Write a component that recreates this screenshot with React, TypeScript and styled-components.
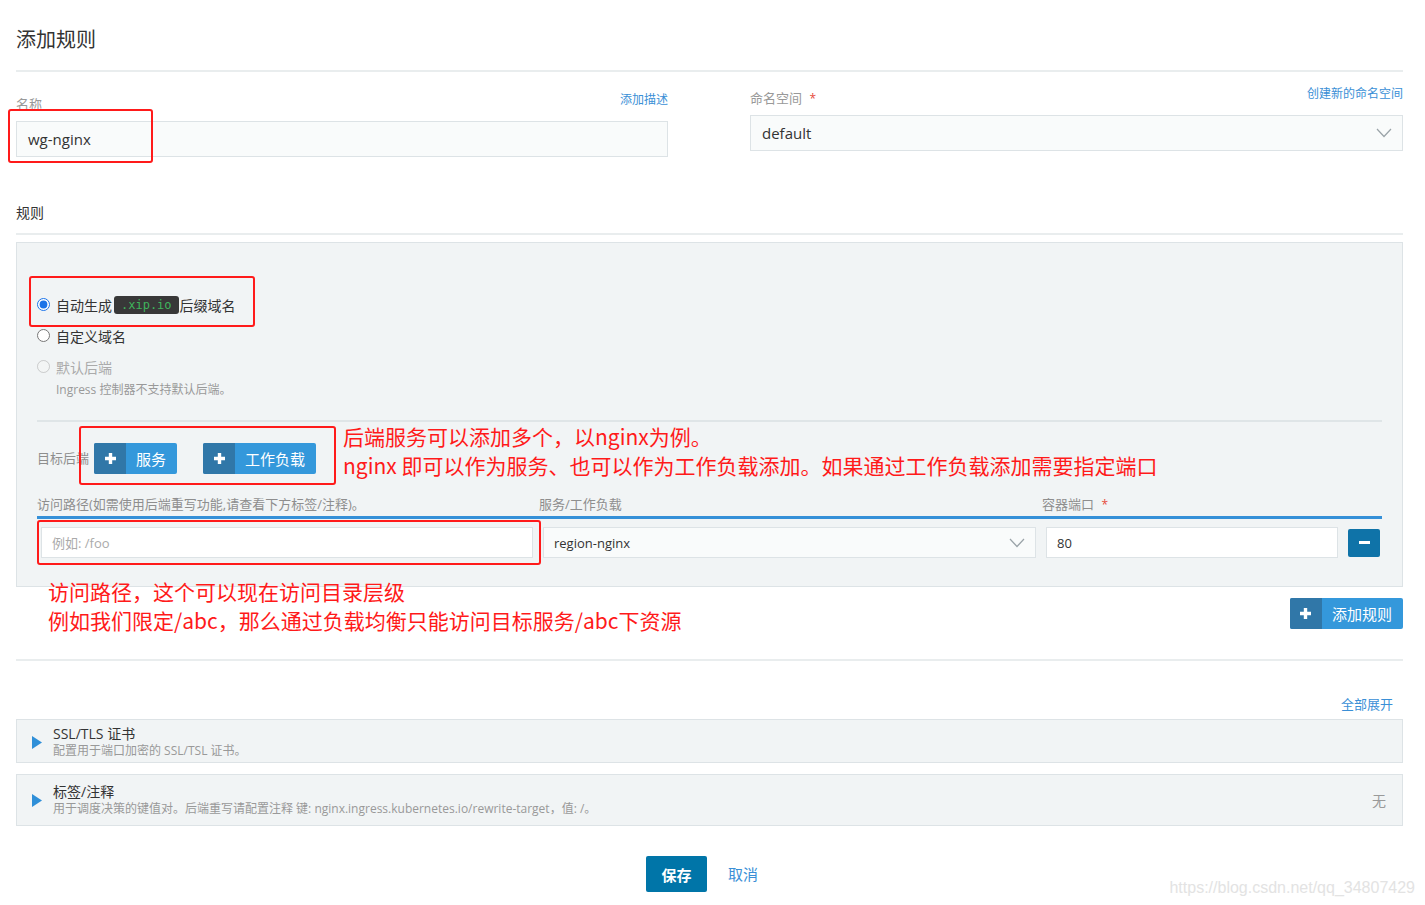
import styled, { createGlobalStyle } from "styled-components";

const FONT = `"Open Sans", "Noto Sans CJK SC", sans-serif`;
const BLUE = "#3498db";
const LINK = "#3a8fd6";
const BORDER = "#dde3e6";
const PANEL = "#f1f4f5";

const GlobalStyle = createGlobalStyle`
  html, body {
    margin: 0;
    padding: 0;
    background: #fff;
    font-family: ${FONT};
    color: #333;
    overflow: hidden;
  }
  * { box-sizing: border-box; }
`;

const Plus = () => (
  <svg width="13" height="13" viewBox="0 0 13 13">
    <path d="M6.5 1v11M1 6.5h11" stroke="#fff" strokeWidth="3.4" />
  </svg>
);

const Chevron = () => (
  <svg width="16" height="10" viewBox="0 0 16 10">
    <polyline points="1,1 8,8.5 15,1" fill="none" stroke="#9aa3a8" strokeWidth="1.2" />
  </svg>
);

const Triangle = () => (
  <svg width="10" height="13" viewBox="0 0 10 13">
    <polygon points="0,0 10,6.5 0,13" fill="#2f8fd8" />
  </svg>
);

const IconButton = ({ text }: { text: string }) => (
  <StyledIconButton>
    <StyledIconPart>
      <Plus />
    </StyledIconPart>
    <StyledIconText>{text}</StyledIconText>
  </StyledIconButton>
);

const App = () => {
  return (
    <StyledPage>
      <GlobalStyle />
      <StyledTitle>添加规则</StyledTitle>
      <StyledRule />

      <StyledFormGrid>
        <StyledField offset={19}>
          <StyledLabelRow>
            <StyledLabel>名称</StyledLabel>
            <StyledLink>添加描述</StyledLink>
          </StyledLabelRow>
          <StyledMarkedBox>
            <StyledInput tinted>wg-nginx</StyledInput>
            <StyledMarker style={{ left: -8, top: -12, width: 145, height: 54 }} />
          </StyledMarkedBox>
        </StyledField>
        <StyledField offset={13}>
          <StyledLabelRow>
            <StyledLabel>
              命名空间 <StyledStar>*</StyledStar>
            </StyledLabel>
            <StyledLink>创建新的命名空间</StyledLink>
          </StyledLabelRow>
          <StyledInput tinted>
            default
            <Chevron />
          </StyledInput>
        </StyledField>
      </StyledFormGrid>

      <StyledSectionTitle>规则</StyledSectionTitle>
      <StyledRule />

      <StyledPanel>
        <StyledRadioGroup>
          <StyledRadioRow>
            <StyledRadio type="radio" name="host" defaultChecked />
            自动生成<StyledCode>.xip.io</StyledCode>后缀域名
          </StyledRadioRow>
          <StyledRadioRow>
            <StyledRadio type="radio" name="host" />
            自定义域名
          </StyledRadioRow>
          <StyledRadioRow disabled>
            <StyledRadio type="radio" name="host" disabled />
            默认后端
          </StyledRadioRow>
          <StyledHelp>Ingress 控制器不支持默认后端。</StyledHelp>
          <StyledMarker style={{ left: -8, top: -13, width: 226, height: 51 }} />
        </StyledRadioGroup>

        <StyledInnerRule />

        <StyledTargetRow>
          <StyledSmallLabel>目标后端</StyledSmallLabel>
          <StyledButtons>
            <IconButton text="服务" />
            <IconButton text="工作负载" />
          </StyledButtons>
          <StyledMarker style={{ left: 42, top: -17, width: 257, height: 59 }} />
          <StyledNote style={{ left: 306, top: -21 }}>
            后端服务可以添加多个，以nginx为例。
            <br />
            nginx 即可以作为服务、也可以作为工作负载添加。如果通过工作负载添加需要指定端口
          </StyledNote>
        </StyledTargetRow>

        <StyledTableHead>
          <StyledSmallLabel>访问路径(如需使用后端重写功能,请查看下方标签/注释)。</StyledSmallLabel>
          <StyledSmallLabel>服务/工作负载</StyledSmallLabel>
          <StyledSmallLabel>
            容器端口 <StyledStar>*</StyledStar>
          </StyledSmallLabel>
          <span />
        </StyledTableHead>
        <StyledTableRow>
          <StyledCell>
            <StyledCellInput placeholder>例如: /foo</StyledCellInput>
          </StyledCell>
          <StyledCell>
            <StyledCellInput tinted>
              region-nginx
              <Chevron />
            </StyledCellInput>
          </StyledCell>
          <StyledCell>
            <StyledCellInput>80</StyledCellInput>
          </StyledCell>
          <StyledCell>
            <StyledMinus>
              <span />
            </StyledMinus>
          </StyledCell>
          <StyledMarker style={{ left: 0, top: -7, width: 504, height: 45 }} />
        </StyledTableRow>
      </StyledPanel>

      <StyledAddRow>
        <StyledNote style={{ left: 32, top: -21 }}>
          访问路径，这个可以现在访问目录层级
          <br />
          例如我们限定/abc，那么通过负载均衡只能访问目标服务/abc下资源
        </StyledNote>
        <IconButton text="添加规则" />
      </StyledAddRow>

      <StyledRule spaced />

      <StyledExpandAll>
        <StyledLink>全部展开</StyledLink>
      </StyledExpandAll>

      <StyledAccordion>
        <Triangle />
        <StyledAccordionBody>
          <StyledAccordionTitle>SSL/TLS 证书</StyledAccordionTitle>
          <StyledAccordionSub>配置用于端口加密的 SSL/TSL 证书。</StyledAccordionSub>
        </StyledAccordionBody>
      </StyledAccordion>
      <StyledAccordion tall>
        <Triangle />
        <StyledAccordionBody>
          <StyledAccordionTitle>标签/注释</StyledAccordionTitle>
          <StyledAccordionSub>
            用于调度决策的键值对。后端重写请配置注释 键: nginx.ingress.kubernetes.io/rewrite-target，值: /。
          </StyledAccordionSub>
        </StyledAccordionBody>
        <StyledNone>无</StyledNone>
      </StyledAccordion>

      <StyledFooter>
        <StyledSave>保存</StyledSave>
        <StyledCancel>取消</StyledCancel>
      </StyledFooter>

      <StyledWatermark>https://blog.csdn.net/qq_34807429</StyledWatermark>
    </StyledPage>
  );
};

export default App;

const StyledPage = styled.div`
  position: relative;
  width: 1425px;
  height: 905px;
  padding: 26px 22px 0 16px;
`;

const StyledTitle = styled.h1`
  margin: 0 0 16px;
  font-size: 20px;
  line-height: 28px;
  font-weight: 400;
  color: #333;
`;

const StyledRule = styled.div<{ spaced?: boolean }>`
  height: 2px;
  background: #e9edee;
  margin-top: ${(p) => (p.spaced ? "30px" : "0")};
`;

const StyledFormGrid = styled.div`
  display: grid;
  grid-template-columns: 652px 1fr;
  gap: 82px;
`;

const StyledField = styled.div<{ offset: number }>`
  padding-top: ${(p) => p.offset}px;
`;

const StyledLabelRow = styled.div`
  display: flex;
  justify-content: space-between;
  align-items: flex-start;
  height: 22px;
  margin-bottom: 8px;
`;

const StyledLabel = styled.span`
  margin-top: 4px;
  font-size: 13px;
  line-height: 18px;
  color: #999;
`;

const StyledStar = styled.span`
  color: #e64a3b;
  margin-left: 4px;
  font-size: 12px;
`;

const StyledLink = styled.span`
  font-size: 12px;
  line-height: 18px;
  color: ${LINK};
  cursor: pointer;
`;

const StyledMarkedBox = styled.div`
  position: relative;
`;

const StyledMarker = styled.div`
  position: absolute;
  border: 2px solid #ff1a1a;
  border-radius: 3px;
  pointer-events: none;
`;

const StyledInput = styled.div<{ tinted?: boolean }>`
  display: flex;
  align-items: center;
  justify-content: space-between;
  height: 36px;
  padding: 0 10px 0 11px;
  border: 1px solid ${BORDER};
  background: ${(p) => (p.tinted ? "#f9fbfb" : "#fff")};
  font-size: 15px;
  color: #333;
`;

const StyledSectionTitle = styled.div`
  margin: 46px 0 10px;
  font-size: 14px;
  line-height: 20px;
  color: #333;
`;

const StyledPanel = styled.div`
  margin-top: 7px;
  padding: 46px 20px 28px;
  background: ${PANEL};
  border: 1px solid ${BORDER};
`;

const StyledRadioGroup = styled.div`
  position: relative;
`;

const StyledRadioRow = styled.label<{ disabled?: boolean }>`
  display: flex;
  align-items: center;
  height: 31px;
  font-size: 14px;
  color: ${(p) => (p.disabled ? "#aaa" : "#333")};
`;

const StyledRadio = styled.input`
  width: 13px;
  height: 13px;
  margin: 0 6px 0 0;
  accent-color: #1a73e8;
`;

const StyledCode = styled.span`
  display: inline-block;
  margin: 0 1px 0 2px;
  padding: 0 7px;
  height: 18px;
  line-height: 18px;
  border-radius: 3px;
  background: #383838;
  color: #3fb55c;
  font-family: "DejaVu Sans Mono", monospace;
  font-size: 12px;
`;

const StyledHelp = styled.div`
  padding-left: 19px;
  font-size: 12px;
  line-height: 16px;
  color: #999;
`;

const StyledInnerRule = styled.div`
  height: 2px;
  margin-top: 22px;
  background: #dfe5e7;
`;

const StyledTargetRow = styled.div`
  position: relative;
  display: flex;
  align-items: center;
  height: 30px;
  margin-top: 21px;
`;

const StyledSmallLabel = styled.span`
  font-size: 13px;
  line-height: 18px;
  color: #8e8e8e;
`;

const StyledButtons = styled.div`
  display: flex;
  gap: 26px;
  margin-left: 5px;
`;

const StyledIconButton = styled.button`
  display: flex;
  align-items: stretch;
  height: 31px;
  padding: 0;
  border: 0;
  border-radius: 2px;
  overflow: hidden;
  background: ${BLUE};
  font-family: ${FONT};
  cursor: pointer;
`;

const StyledIconPart = styled.span`
  display: flex;
  align-items: center;
  justify-content: center;
  width: 32px;
  background: #3077a8;
`;

const StyledIconText = styled.span`
  display: flex;
  align-items: center;
  padding: 0 11px 0 10px;
  font-size: 15px;
  color: #fff;
`;

const StyledNote = styled.div`
  position: absolute;
  white-space: nowrap;
  font-family: "Noto Sans CJK SC", sans-serif;
  font-size: 21px;
  line-height: 29px;
  color: #ff1a1a;
  pointer-events: none;
`;

const StyledTableHead = styled.div`
  display: grid;
  grid-template-columns: 498px 499px 1fr 38px;
  gap: 4px;
  margin-top: 22px;
  padding-bottom: 2px;
  border-bottom: 3px solid #3590d8;
`;

const StyledTableRow = styled.div`
  position: relative;
  display: grid;
  grid-template-columns: 498px 499px 1fr 38px;
  gap: 4px;
  margin-top: 8px;
`;

const StyledCell = styled.div`
  display: flex;
  align-items: center;
  padding: 0 2px 0 4px;
`;

const StyledCellInput = styled.div<{ tinted?: boolean; placeholder?: boolean }>`
  display: flex;
  align-items: center;
  justify-content: space-between;
  width: 100%;
  height: 31px;
  padding: 0 10px;
  border: 1px solid ${BORDER};
  background: ${(p) => (p.tinted ? "#f9fbfb" : "#fff")};
  font-size: 13px;
  color: ${(p) => (p.placeholder ? "#aaa" : "#333")};
`;

const StyledMinus = styled.button`
  display: flex;
  align-items: center;
  justify-content: center;
  width: 34px;
  height: 28px;
  padding: 0;
  border: 0;
  border-radius: 2px;
  background: #0f73a8;

  span {
    width: 11px;
    height: 3px;
    background: #fff;
  }
`;

const StyledAddRow = styled.div`
  position: relative;
  display: flex;
  justify-content: flex-end;
  margin-top: 11px;
`;

const StyledExpandAll = styled.div`
  display: flex;
  justify-content: flex-end;
  margin-top: 34px;
  padding-right: 10px;

  span {
    font-size: 13px;
  }
`;

const StyledAccordion = styled.div<{ tall?: boolean }>`
  display: flex;
  align-items: center;
  margin-top: ${(p) => (p.tall ? "11px" : "6px")};
  padding: ${(p) => (p.tall ? "8px 16px 8px 15px" : "5px 16px 3px 15px")};
  background: ${PANEL};
  border: 1px solid ${BORDER};
`;

const StyledAccordionBody = styled.div`
  flex: 1;
  margin-left: 11px;
`;

const StyledAccordionTitle = styled.div`
  font-size: 14px;
  line-height: 18px;
  color: #333;
`;

const StyledAccordionSub = styled.div`
  font-size: 12px;
  line-height: 16px;
  color: #999;
`;

const StyledNone = styled.span`
  font-size: 14px;
  color: #999;
`;

const StyledFooter = styled.div`
  display: flex;
  justify-content: center;
  align-items: center;
  gap: 21px;
  margin-top: 30px;
  padding-right: 15px;
`;

const StyledSave = styled.button`
  width: 61px;
  height: 36px;
  border: 0;
  border-radius: 2px;
  background: #0075a8;
  color: #fff;
  font-family: ${FONT};
  font-size: 15px;
  font-weight: 600;
`;

const StyledCancel = styled.span`
  font-size: 15px;
  line-height: 20px;
  color: ${LINK};
`;

const StyledWatermark = styled.div`
  position: absolute;
  right: 10px;
  bottom: 8px;
  font-family: "Liberation Sans", Arial, sans-serif;
  font-size: 16px;
  color: #e3e3e3;
`;
